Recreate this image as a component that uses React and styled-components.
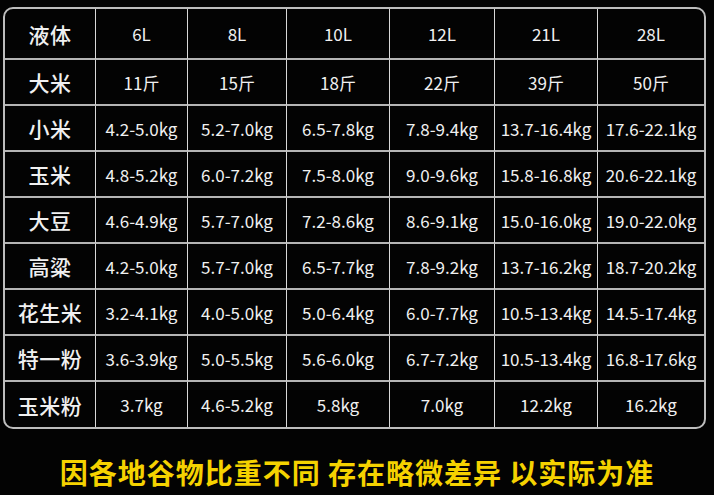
import React from "react";
import styled, { createGlobalStyle } from "styled-components";

const GlobalStyle = createGlobalStyle`
  html, body {
    margin: 0;
    padding: 0;
    background: #030303;
  }
  body {
    font-family: "Noto Sans CJK SC", "Noto Sans", sans-serif;
  }
`;

const Page = styled.div`
  width: 714px;
  height: 495px;
  background: #030303;
  padding: 7px 0 0 3px;
  box-sizing: border-box;
  display: flex;
  flex-direction: column;
`;

const Table = styled.div`
  width: 703px;
  height: 422px;
  box-sizing: border-box;
  border: 2px solid #bdbdbd;
  border-radius: 10px;
  overflow: hidden;
  display: grid;
  grid-template-columns: 91px 92px 99px 103px 105px 103px 106px;
  grid-template-rows: 51px repeat(7, 46px) 45px;
`;

const Cell = styled.div`
  display: flex;
  align-items: center;
  justify-content: center;
  box-sizing: border-box;
  border-right: ${(p) => (p.$lastCol ? "none" : "1px solid #d8d8d8")};
  border-bottom: ${(p) => (p.$lastRow ? "none" : "2px solid #b5b5b5")};
  color: #f0f0f0;
  font-size: ${(p) => (p.$head ? "21px" : "17px")};
  font-weight: ${(p) => (p.$head ? 500 : 400)};
  white-space: nowrap;
  letter-spacing: ${(p) => (p.$head ? "0.5px" : "0")};
`;

const Note = styled.div`
  margin-top: 26px;
  margin-left: -3px;
  text-align: center;
  color: #f5d200;
  font-size: 28px;
  font-weight: 700;
  line-height: 34px;
  letter-spacing: 1px;
  white-space: pre;
`;

const rows = [
  ["液体", "6L", "8L", "10L", "12L", "21L", "28L"],
  ["大米", "11斤", "15斤", "18斤", "22斤", "39斤", "50斤"],
  ["小米", "4.2-5.0kg", "5.2-7.0kg", "6.5-7.8kg", "7.8-9.4kg", "13.7-16.4kg", "17.6-22.1kg"],
  ["玉米", "4.8-5.2kg", "6.0-7.2kg", "7.5-8.0kg", "9.0-9.6kg", "15.8-16.8kg", "20.6-22.1kg"],
  ["大豆", "4.6-4.9kg", "5.7-7.0kg", "7.2-8.6kg", "8.6-9.1kg", "15.0-16.0kg", "19.0-22.0kg"],
  ["高粱", "4.2-5.0kg", "5.7-7.0kg", "6.5-7.7kg", "7.8-9.2kg", "13.7-16.2kg", "18.7-20.2kg"],
  ["花生米", "3.2-4.1kg", "4.0-5.0kg", "5.0-6.4kg", "6.0-7.7kg", "10.5-13.4kg", "14.5-17.4kg"],
  ["特一粉", "3.6-3.9kg", "5.0-5.5kg", "5.6-6.0kg", "6.7-7.2kg", "10.5-13.4kg", "16.8-17.6kg"],
  ["玉米粉", "3.7kg", "4.6-5.2kg", "5.8kg", "7.0kg", "12.2kg", "16.2kg"],
];

export default function App() {
  return (
    <>
      <GlobalStyle />
      <Page>
        <Table>
          {rows.map((row, r) =>
            row.map((text, c) => (
              <Cell
                key={`${r}-${c}`}
                $head={c === 0}
                $lastCol={c === row.length - 1}
                $lastRow={r === rows.length - 1}
              >
                {text}
              </Cell>
            ))
          )}
        </Table>
        <Note>因各地谷物比重不同 存在略微差异 以实际为准</Note>
      </Page>
    </>
  );
}
